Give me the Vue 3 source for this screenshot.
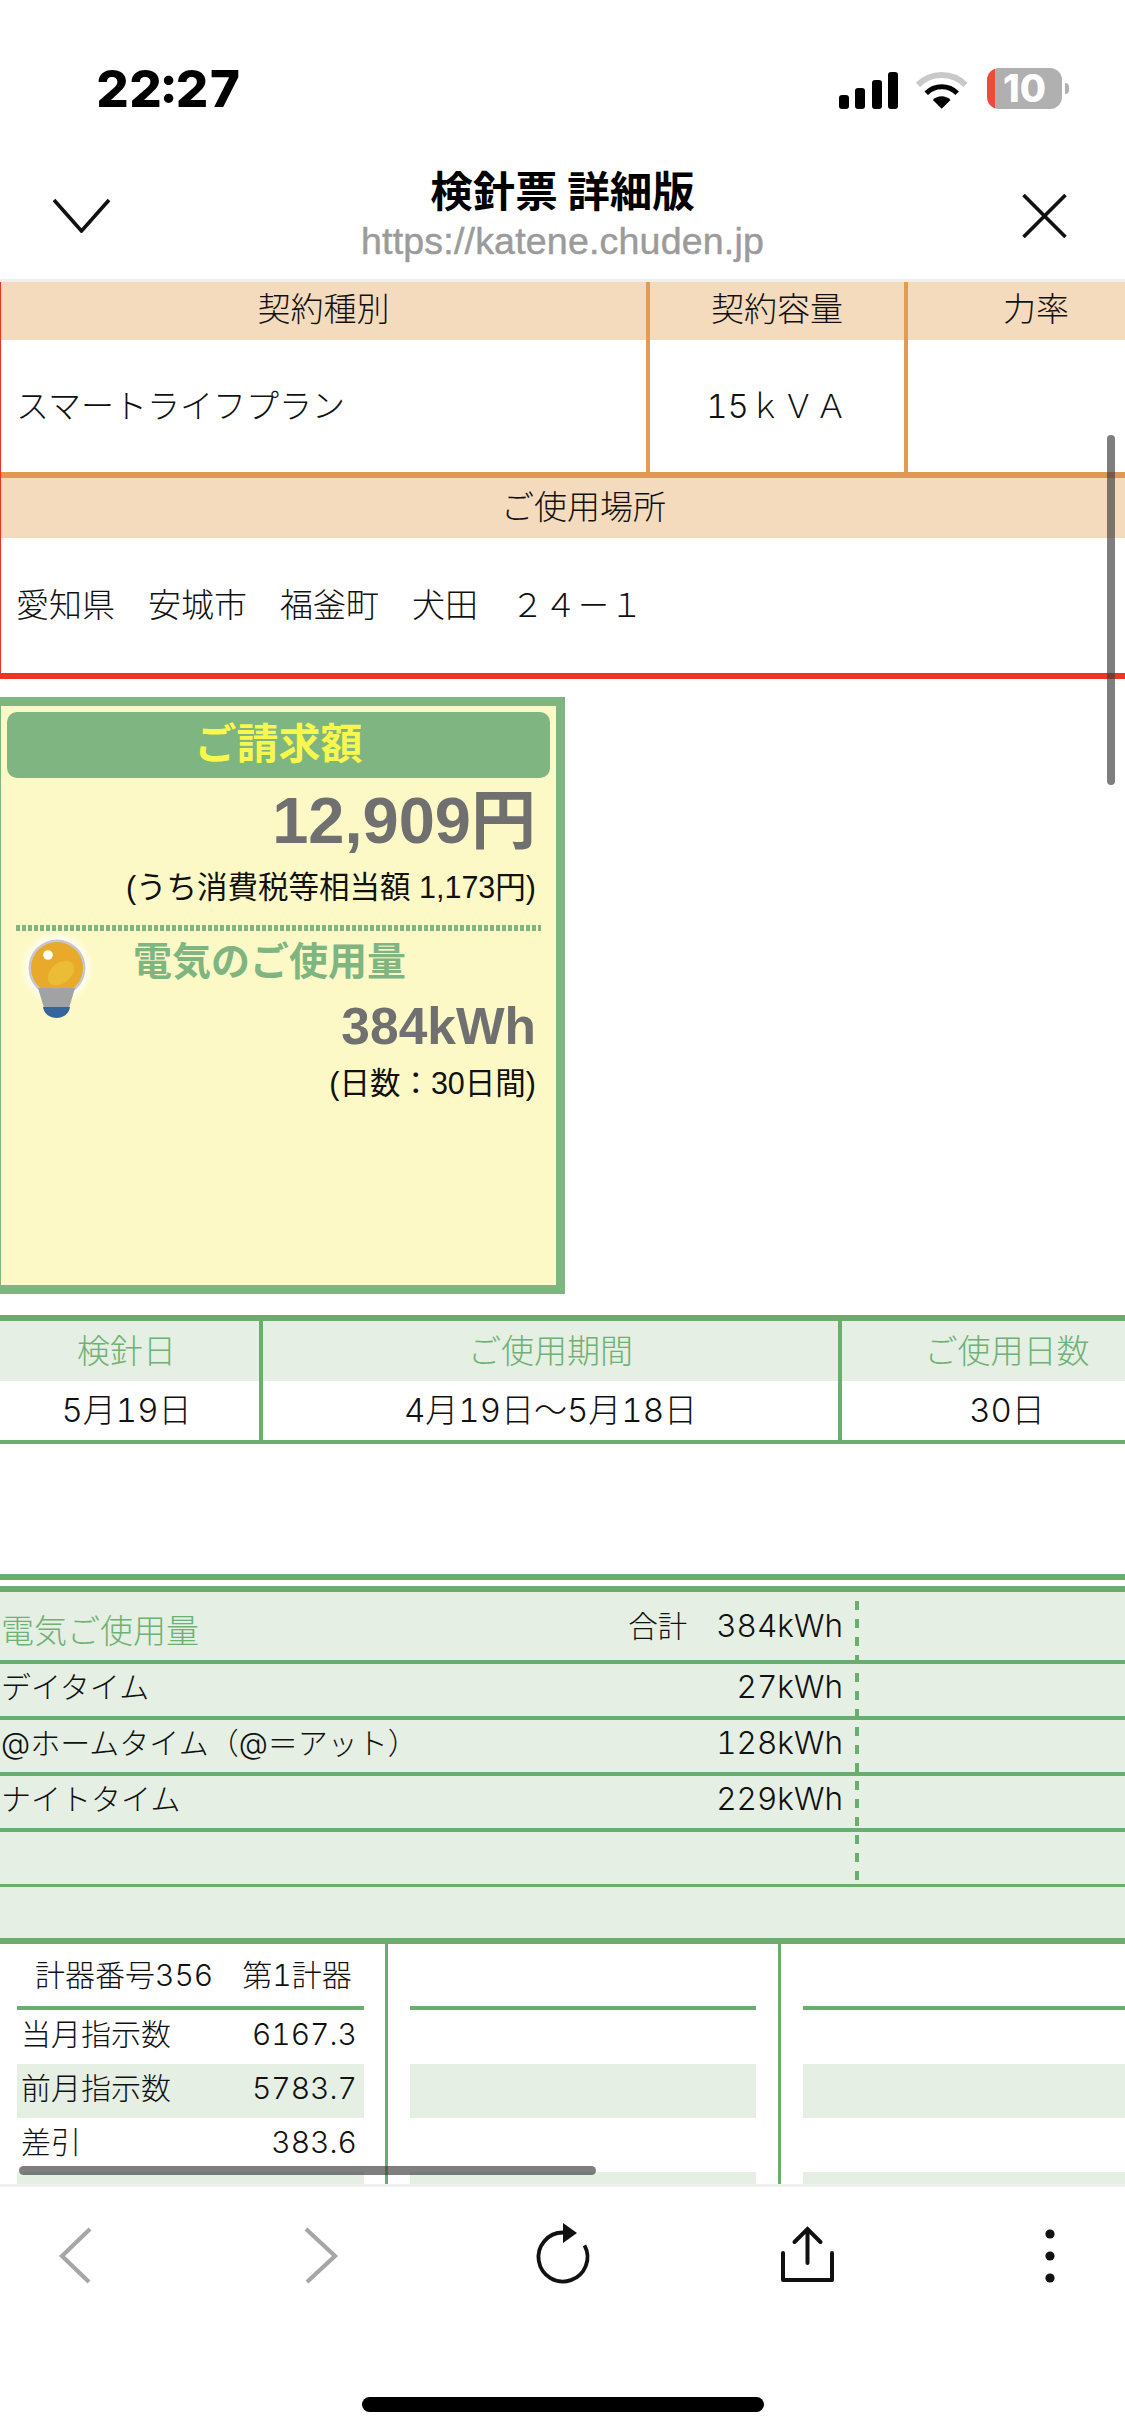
<script setup>
const usageRows = [
  { name: 'デイタイム', value: '27kWh' },
  { name: '@ホームタイム（@＝アット）', value: '128kWh' },
  { name: 'ナイトタイム', value: '229kWh' },
  { name: '', value: '' }
]
const meterRows = [
  { label: '当月指示数', value: '6167.3' },
  { label: '前月指示数', value: '5783.7', shaded: true },
  { label: '差引', value: '383.6' },
  { label: '', value: '', shaded: true }
]
const emptyRows = [false, true, false, true]
</script>

<template>
  <div class="phone">
    <header class="status">
      <span class="time">22:27</span>
      <div class="indicators">
        <div class="signal">
          <i class="b1"></i><i class="b2"></i><i class="b3"></i><i class="b4"></i>
        </div>
        <svg class="wifi" width="52" height="38" viewBox="0 0 52 38">
          <path d="M1.9 12.9A33.7 33.7 0 0 1 49.5 12.9" fill="none" stroke="#c9c9c9" stroke-width="6" />
          <path d="M10.2 21.2A21.9 21.9 0 0 1 41.2 21.2" fill="none" stroke="#000" stroke-width="5" />
          <path d="M25.7 36.7L16.9 27.9A12.5 12.5 0 0 1 34.5 27.9Z" fill="#000" />
        </svg>
        <div class="battery">10</div>
        <div class="nub"></div>
      </div>
    </header>

    <nav class="nav">
      <div class="nav-left">
        <svg width="59" height="35" viewBox="0 0 59 35">
          <path d="M2 2L29.5 33L57 2" fill="none" stroke="#111" stroke-width="3.6" />
        </svg>
      </div>
      <div class="nav-title">
        <div class="title">検針票 詳細版</div>
        <div class="url">https://katene.chuden.jp</div>
      </div>
      <div class="nav-right">
        <svg width="45" height="44" viewBox="0 0 45 44">
          <path d="M1.5 1L43.5 43M43.5 1L1.5 43" fill="none" stroke="#111" stroke-width="3.6" />
        </svg>
      </div>
    </nav>

    <main class="content">
      <div class="page">
        <section class="contract">
          <div class="contract-grid">
            <div class="c-head">契約種別</div>
            <div class="c-head c-div">契約容量</div>
            <div class="c-head c-div">力率</div>
            <div class="c-val c-left">スマートライフプラン</div>
            <div class="c-val c-div">15ｋＶＡ</div>
            <div class="c-val c-div"></div>
          </div>
          <div class="c-head place-head">ご使用場所</div>
          <div class="c-val c-left place-val">愛知県　安城市　福釜町　犬田　２４－１</div>
        </section>

        <section class="card">
          <div class="card-title">ご請求額</div>
          <div class="amount">12,909円</div>
          <div class="tax">(うち消費税等相当額 1,173円)</div>
          <div class="dots"></div>
          <div class="use">
            <svg class="bulb" width="76" height="92" viewBox="0 0 76 92">
              <defs>
                <radialGradient id="halo">
                  <stop offset="0.72" stop-color="#ffffff" stop-opacity="0.9" />
                  <stop offset="1" stop-color="#ffffff" stop-opacity="0" />
                </radialGradient>
              </defs>
              <circle cx="38" cy="37" r="37" fill="url(#halo)" />
              <circle cx="38" cy="37" r="28.5" fill="#c6c8d0" />
              <circle cx="38" cy="37" r="26" fill="#e9aa2c" />
              <ellipse cx="42" cy="42" rx="15" ry="10" fill="#ebbd37" transform="rotate(-40 42 42)" />
              <circle cx="29" cy="24" r="4.8" fill="#fff" />
              <path d="M19 57H56L50 77H25Z" fill="#a0a2a4" />
              <path d="M24 76H51C50 83 44 87 37.5 87C31 87 25 83 24 76Z" fill="#35659c" />
            </svg>
            <div class="use-text">
              <div class="use-title">電気のご使用量</div>
              <div class="use-amount">384kWh</div>
              <div class="use-days">(日数：30日間)</div>
            </div>
          </div>
        </section>

        <section class="dates">
          <div class="d-head d-first">検針日</div>
          <div class="d-head d-div">ご使用期間</div>
          <div class="d-head d-div">ご使用日数</div>
          <div class="d-val d-first">5月19日</div>
          <div class="d-val d-div">4月19日～5月18日</div>
          <div class="d-val d-div">30日</div>
        </section>

        <div class="rule"></div>

        <section class="usage">
          <div class="u-row u-total">
            <span class="u-name u-green">電気ご使用量</span>
            <span class="u-val"><span class="u-sum">合計</span>384kWh</span>
          </div>
          <div v-for="row in usageRows" :key="row.name" class="u-row">
            <span class="u-name">{{ row.name }}</span>
            <span class="u-val">{{ row.value }}</span>
          </div>
          <div class="u-row u-last"></div>
          <div class="u-dash"></div>
        </section>

        <section class="meters">
          <div class="m-col m-first">
            <div class="m-head"><span>計器番号356</span><span>第1計器</span></div>
            <div v-for="row in meterRows" :key="row.label" class="m-row" :class="{ shaded: row.shaded }">
              <span>{{ row.label }}</span><span>{{ row.value }}</span>
            </div>
          </div>
          <div class="m-col m-second">
            <div class="m-head"></div>
            <div v-for="(shaded, i) in emptyRows" :key="i" class="m-row" :class="{ shaded }"></div>
          </div>
          <div class="m-col m-third">
            <div class="m-head"></div>
            <div v-for="(shaded, i) in emptyRows" :key="i" class="m-row" :class="{ shaded }"></div>
          </div>
        </section>
      </div>
      <div class="vbar"></div>
      <div class="hbar"></div>
    </main>

    <footer class="toolbar">
      <div class="tools">
        <svg width="100" height="70" viewBox="0 0 100 70">
          <path d="M64 9L36 36L63 62" fill="none" stroke="#a6a6a6" stroke-width="4.2" />
        </svg>
        <svg width="100" height="70" viewBox="0 0 100 70">
          <path d="M36 9L65 36L37 62" fill="none" stroke="#a6a6a6" stroke-width="4.2" />
        </svg>
        <svg width="100" height="70" viewBox="0 0 100 70">
          <path d="M50 12.5A24.5 24.5 0 1 0 71.5 25.3" fill="none" stroke="#111" stroke-width="3.8" />
          <path d="M50 3L64 13L50 23Z" fill="#111" />
        </svg>
        <svg width="100" height="70" viewBox="0 0 100 70">
          <path d="M26 33V60H75V33" fill="none" stroke="#111" stroke-width="4" stroke-linejoin="round" stroke-linecap="round" />
          <path d="M50.5 43V10M37.5 22L50.5 9L63.5 22" fill="none" stroke="#111" stroke-width="4" stroke-linecap="round" />
        </svg>
        <svg width="100" height="70" viewBox="0 0 100 70">
          <circle cx="50" cy="14" r="4.6" fill="#111" />
          <circle cx="50" cy="36" r="4.6" fill="#111" />
          <circle cx="50" cy="58" r="4.6" fill="#111" />
        </svg>
      </div>
      <div class="home"></div>
    </footer>
  </div>
</template>

<style scoped>
.phone {
  width: 1125px;
  height: 2436px;
  display: flex;
  flex-direction: column;
  overflow: hidden;
  background: #fff;
  color: #111;
  font-family: Inter, "Noto Sans CJK JP", sans-serif;
  font-variant-numeric: tabular-nums;
}

/* status bar */
.status {
  height: 130px;
  box-sizing: border-box;
  padding: 68px 56px 0 96px;
  display: flex;
  justify-content: space-between;
  align-items: flex-start;
}
.time {
  font-size: 51px;
  line-height: 41px;
  font-weight: 800;
  color: #000;
}
.indicators {
  display: flex;
  align-items: center;
  height: 41px;
}
.signal {
  display: flex;
  align-items: flex-end;
  gap: 6.5px;
  height: 37px;
  margin-top: 4px;
  margin-right: 18px;
}
.signal i {
  display: block;
  width: 10px;
  border-radius: 3px;
  background: #000;
}
.signal .b1 { height: 14px; }
.signal .b2 { height: 21px; }
.signal .b3 { height: 29px; }
.signal .b4 { height: 37px; }
.wifi {
  margin-top: 4px;
  margin-right: 19px;
}
.battery {
  width: 75px;
  height: 41px;
  border-radius: 12px;
  background: linear-gradient(to right, #ec4c3c 8px, #b0b0b0 8px);
  color: #fff;
  font-size: 38px;
  line-height: 41px;
  font-weight: 800;
  text-align: center;
  font-variant-numeric: normal;
}
.nub {
  width: 4px;
  height: 11px;
  margin-left: 3px;
  border-radius: 0 6px 6px 0;
  background: #b0b0b0;
}

/* nav */
.nav {
  height: 149px;
  box-sizing: border-box;
  padding-top: 36px;
  display: grid;
  grid-template-columns: 1fr auto 1fr;
}
.nav-left {
  padding: 32px 0 0 52px;
}
.nav-right {
  padding: 28px 58px 0 0;
  display: flex;
  justify-content: flex-end;
  align-items: flex-start;
}
.nav-title {
  text-align: center;
}
.title {
  font-size: 42.5px;
  line-height: 46px;
  font-weight: 700;
  color: #000;
  font-family: "Noto Sans CJK JP", sans-serif;
}
.url {
  font-size: 37.5px;
  line-height: 58px;
  color: #9b9b9b;
  letter-spacing: 0.2px;
  -webkit-text-stroke: 0.5px #9b9b9b;
  font-family: "Liberation Sans", sans-serif;
}

/* content */
.content {
  position: relative;
  height: 1908px;
  box-sizing: border-box;
  border-top: 3px solid #efefef;
  border-bottom: 3px solid #efefef;
  overflow: hidden;
}
.page {
  width: 1172px;
  font-size: 33px;
  font-weight: 300;
}

.contract {
  border-left: 1px solid #ee3524;
  border-bottom: 6px solid #ee3524;
}
.contract-grid {
  display: grid;
  grid-template-columns: 645px 258px 260px;
  grid-template-rows: 58px 132px;
  border-bottom: 6px solid #dd9a57;
}
.c-head {
  background: #f4dbbd;
  display: flex;
  align-items: center;
  justify-content: center;
  line-height: 1;
  padding-bottom: 4px;
  box-sizing: border-box;
}
.c-val {
  display: flex;
  align-items: center;
  justify-content: center;
  box-sizing: border-box;
  padding-bottom: 5px;
}
.c-left {
  justify-content: flex-start;
  padding-left: 15px;
}
.c-div {
  border-left: 4px solid #e39b55;
}
.place-head {
  height: 60px;
  padding-right: 6px;
  padding-bottom: 2px;
}
.place-val {
  height: 135px;
}

.card {
  width: 565px;
  height: 597px;
  box-sizing: border-box;
  margin-top: 18px;
  border: 9px solid #7eb580;
  border-left-width: 1px;
  background: #fdf9c6;
  font-family: "Liberation Sans", "Noto Sans CJK JP", sans-serif;
  font-weight: 400;
}
.card-title {
  height: 66px;
  margin: 6px 6px 0;
  border-radius: 10px;
  background: #7eb580;
  color: #f8f74d;
  font-size: 42px;
  line-height: 65px;
  font-weight: 700;
  text-align: center;
}
.amount {
  height: 86px;
  line-height: 86px;
  padding-right: 20px;
  text-align: right;
  font-size: 65px;
  font-weight: 700;
  color: #707070;
}
.tax {
  height: 46px;
  line-height: 46px;
  padding-right: 20px;
  text-align: right;
  font-size: 30.5px;
  color: #111;
}
.dots {
  height: 6px;
  margin: 15px 15px 0;
  background: repeating-linear-gradient(to right, #7eb580 0 4px, transparent 4px 6px);
}
.use {
  display: flex;
  align-items: flex-start;
  padding-left: 18px;
}
.bulb {
  flex: none;
}
.use-text {
  flex: 1;
  padding-right: 20px;
  text-align: right;
}
.use-title {
  height: 62px;
  line-height: 62px;
  padding-left: 38px;
  text-align: left;
  font-size: 39px;
  font-weight: 700;
  color: #7eb580;
}
.use-amount {
  height: 66px;
  line-height: 66px;
  font-size: 51.5px;
  font-weight: 700;
  color: #707070;
}
.use-days {
  height: 48px;
  line-height: 48px;
  font-size: 30.5px;
  color: #111;
}

.dates {
  margin-top: 21px;
  display: grid;
  grid-template-columns: 259px 579px 334px;
  grid-template-rows: 60px 59px;
  border-top: 6px solid #6aae6f;
  border-bottom: 4px solid #6aae6f;
}
.d-head, .d-val {
  display: flex;
  align-items: center;
  justify-content: center;
  box-sizing: border-box;
  line-height: 1;
}
.d-head {
  background: #e5efe4;
  color: #6fb174;
}
.d-first {
  padding-right: 6px;
}
.d-div {
  border-left: 4px solid #6aae6f;
}

.rule {
  height: 6px;
  margin-top: 130px;
  background: #6aae6f;
}

.usage {
  position: relative;
  margin-top: 6px;
  border-top: 6px solid #6aae6f;
  border-bottom: 6px solid #6aae6f;
  background: #e5efe4;
}
.u-row {
  height: 52px;
  width: 843px;
  display: flex;
  justify-content: space-between;
  align-items: center;
  padding-left: 1px;
  padding-bottom: 6px;
  box-sizing: border-box;
  line-height: 1;
  font-size: 30px;
  position: relative;
}
.u-row::after {
  content: "";
  position: absolute;
  left: 0;
  width: 1172px;
  top: 52px;
  height: 4px;
  background: #6aae6f;
}
.u-row + .u-row {
  margin-top: 4px;
}
.u-total {
  height: 68px;
  padding-bottom: 0;
}
.u-total::after {
  top: 68px;
}
.u-row:nth-child(5) + .u-last {
  margin-top: 3px;
  height: 51px;
}
.u-row:nth-child(5)::after {
  height: 3px;
}
.u-last::after {
  display: none;
}
.u-name {
  white-space: nowrap;
}
.u-green {
  font-size: 33px;
  color: #6fb174;
  padding-top: 10px;
}
.u-val {
  font-size: 31.5px;
  white-space: nowrap;
}
.u-sum {
  font-size: 29.5px;
  margin-right: 29px;
}
.u-dash {
  position: absolute;
  left: 855px;
  top: 9px;
  width: 4px;
  height: 283px;
  background: repeating-linear-gradient(to bottom, #6aae6f 0 9px, transparent 9px 18px);
}

.meters {
  display: grid;
  grid-template-columns: 385px 393px 394px;
  font-size: 30px;
}
.m-col {
  box-sizing: border-box;
  height: 240px;
  overflow: hidden;
}
.m-first {
  padding: 0 21px 0 17px;
}
.m-second {
  border-left: 3px solid #6aae6f;
  padding: 0 22px;
}
.m-third {
  border-left: 3px solid #6aae6f;
  padding: 0 0 0 22px;
}
.m-head {
  height: 66px;
  box-sizing: border-box;
  border-bottom: 4px solid #6aae6f;
  display: flex;
  gap: 29px;
  align-items: center;
  padding-left: 18px;
  white-space: nowrap;
  line-height: 1;
}
.m-row {
  height: 54px;
  box-sizing: border-box;
  display: flex;
  justify-content: space-between;
  align-items: center;
  padding: 0 7px 7px 4px;
  line-height: 1;
}
.m-row:first-of-type {
  height: 53px;
}
.shaded {
  background: #e5efe4;
}

.vbar {
  position: absolute;
  right: 10px;
  top: 153px;
  width: 8px;
  height: 350px;
  border-radius: 4px;
  background: rgba(60, 60, 60, 0.66);
}
.hbar {
  position: absolute;
  left: 19px;
  bottom: 9px;
  width: 577px;
  height: 9px;
  border-radius: 5px;
  background: rgba(60, 60, 60, 0.66);
}

/* toolbar */
.toolbar {
  flex: 1;
  display: flex;
  flex-direction: column;
  align-items: center;
  padding-top: 33px;
}
.tools {
  align-self: stretch;
  display: flex;
  justify-content: space-between;
  padding: 0 25px 0 26px;
}
.home {
  width: 402px;
  height: 15px;
  margin-top: 107px;
  border-radius: 8px;
  background: #000;
}
</style>
